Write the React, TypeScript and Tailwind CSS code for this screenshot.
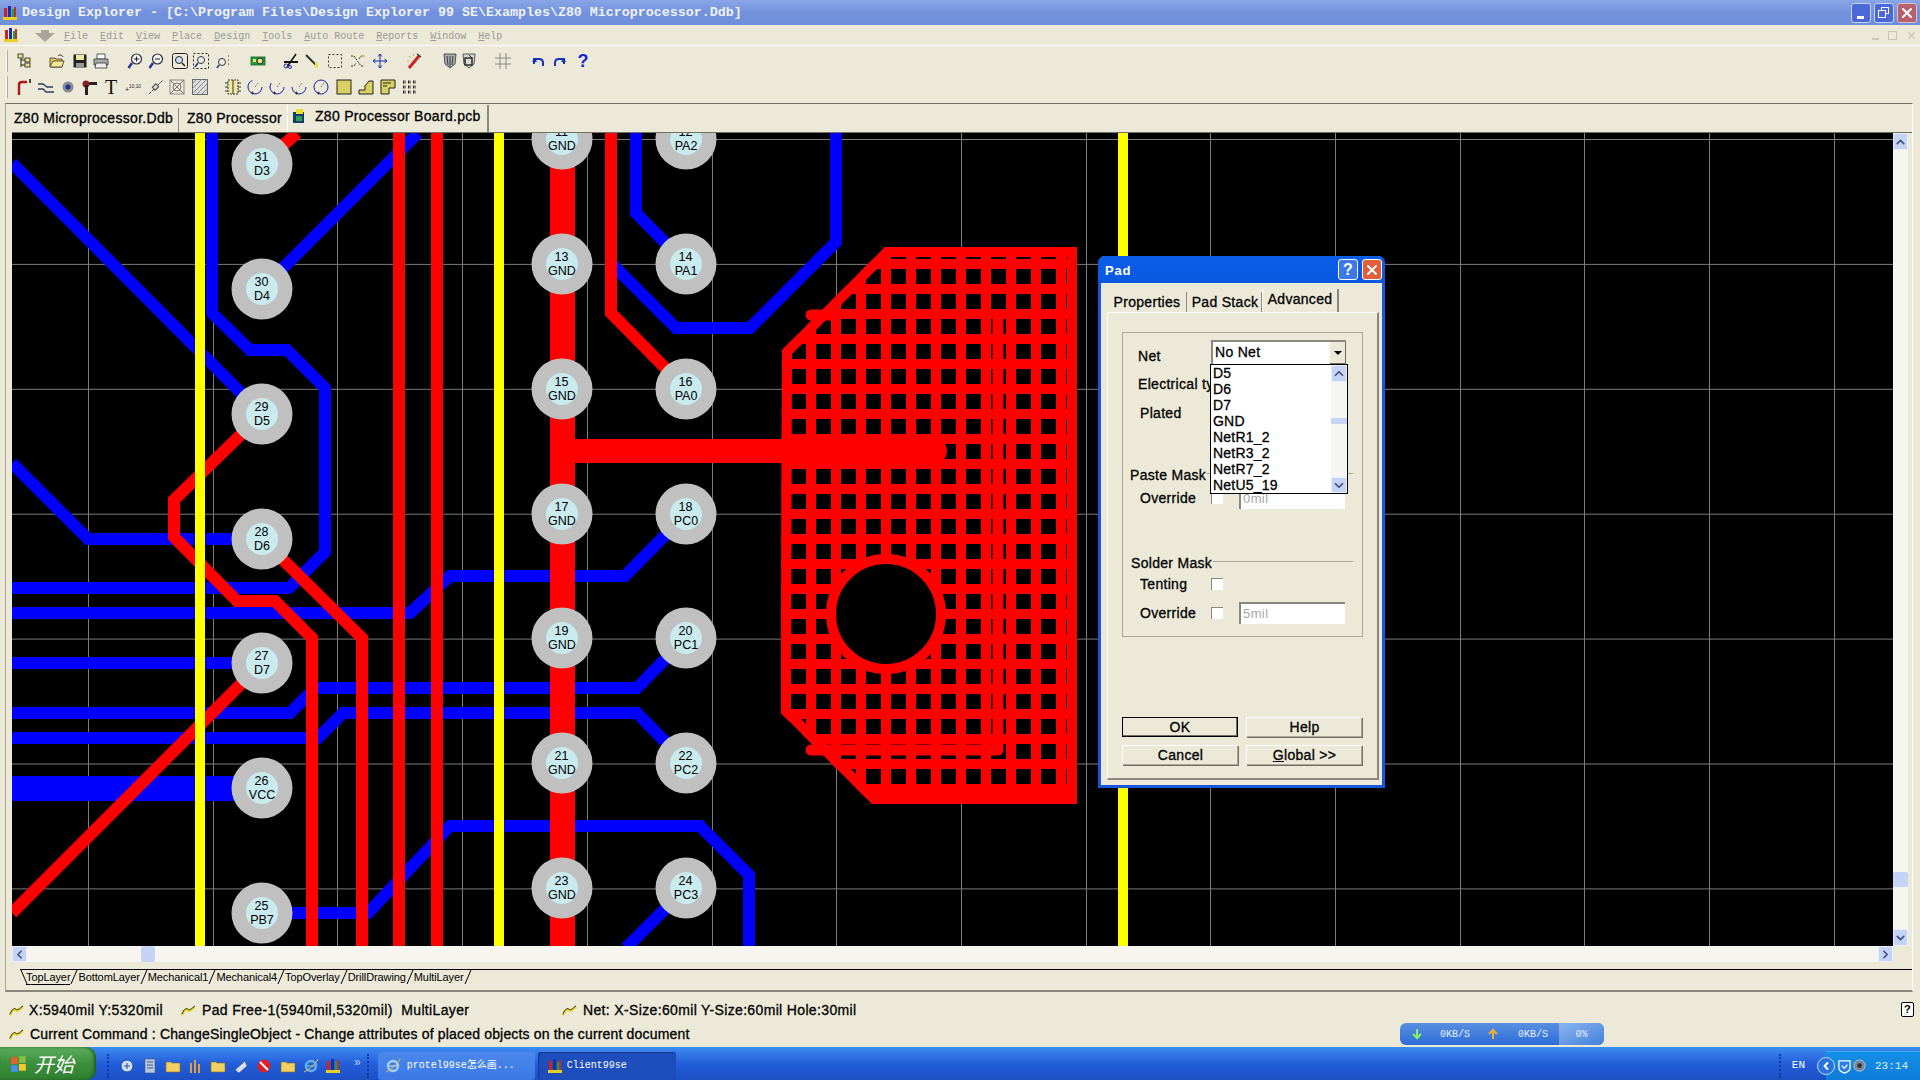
import type { ReactNode } from 'react'
import { ChevronDown, ChevronLeft, ChevronRight, ChevronUp, X } from 'lucide-react'

const MONO = "font-['Liberation_Mono','Noto_Sans_CJK_SC',monospace]"
const BOLDISH = '[-webkit-text-stroke:0.3px_black]'

function Ico({ className = '', children }: { className?: string; children: ReactNode }) {
  return (
    <svg viewBox="0 0 16 16" className={'w-4 h-4 shrink-0 ' + className}>
      {children}
    </svg>
  )
}

type P = { className?: string }

function ProtelIcon({ className = '' }: P) {
  return (
    <Ico className={className}>
      <rect x="1" y="12" width="14" height="3" fill="#e8d020" />
      <rect x="2" y="3" width="3" height="9" fill="#d02020" />
      <rect x="6" y="1" width="3" height="11" fill="#1830a8" />
      <rect x="10" y="4" width="3" height="8" fill="#20a040" />
      <rect x="12" y="2" width="2" height="10" fill="#c03020" />
    </Ico>
  )
}

function Mag({ className = '', children }: { className?: string; children?: ReactNode }) {
  return (
    <Ico className={className}>
      <line x1="5" y1="10" x2="1.5" y2="15" stroke="#2030a0" strokeWidth="2.4" />
      <circle cx="9.5" cy="6" r="5" fill="#f4f4f0" stroke="#303040" strokeWidth="1.2" />
      {children}
    </Ico>
  )
}

function Arc({ className = '', d }: P & { d: string }) {
  return (
    <Ico className={className}>
      <circle cx="8" cy="8" r="7" fill="none" stroke="#1020b0" strokeWidth="1" strokeDasharray={d} />
      <line x1="8" y1="8" x2="11" y2="4" stroke="#555" strokeWidth="1" strokeDasharray="1 1" />
      <path d="M4 14h3M5.500 12.500v3" stroke="#222" strokeWidth="0.8" />
    </Ico>
  )
}

function ToolbarOne() {
  return (
    <div className="h-[26px] flex items-center relative pl-[16px]">
      <div className="absolute left-[6px] top-[2px] w-[2px] h-[22px] border-l border-white border-r-1 border-r-[#aca899]" />
      <Ico>
        <path d="M5 3v11M5 7h4M5 12h4" stroke="#222" fill="none" />
        <rect x="2" y="1" width="5" height="4" fill="#f0e080" stroke="#222" strokeWidth="0.8" />
        <rect x="9" y="5" width="5" height="4" fill="#f0e080" stroke="#222" strokeWidth="0.8" />
        <rect x="9" y="10" width="5" height="4" fill="#f0e080" stroke="#222" strokeWidth="0.8" />
      </Ico>
      <Ico className="ml-[17px]">
        <path d="M1 5h5l1 1h6v8H1z" fill="#e8c850" stroke="#333" strokeWidth="0.8" />
        <path d="M1 14l3-6h11l-2 6z" fill="#f8e890" stroke="#333" strokeWidth="0.8" />
        <path d="M9 3c2-2 4-1 5 1" stroke="#222" fill="none" />
      </Ico>
      <Ico className="ml-[7px]">
        <rect x="1.500" y="1.500" width="13" height="13" fill="#222" />
        <rect x="4" y="2" width="8" height="5" fill="#f0e8a0" />
        <rect x="4" y="10" width="8" height="4" fill="#999" />
      </Ico>
      <Ico className="ml-[5px]">
        <path d="M4 1h8v5H4z" fill="#fff" stroke="#333" strokeWidth="0.8" />
        <path d="M1 6h14v6H1z" fill="#aaa" stroke="#333" strokeWidth="0.8" />
        <path d="M3 10h10l1 5H2z" fill="#eee" stroke="#333" strokeWidth="0.8" />
      </Ico>
      <Mag className="ml-[18px]">
        <path d="M7 6h5M9.500 3.500v5" stroke="#222" />
      </Mag>
      <Mag className="ml-[5px]">
        <path d="M7 6h5" stroke="#222" />
      </Mag>
      <Ico className="ml-[8px]">
        <rect x="0.500" y="0.500" width="15" height="15" rx="2" fill="none" stroke="#222" />
        <circle cx="7" cy="7" r="3.500" fill="#cfe0f8" stroke="#222" />
        <line x1="10" y1="10" x2="13" y2="13" stroke="#222" strokeWidth="1.500" />
      </Ico>
      <Ico className="ml-[5px]">
        <rect x="0.500" y="0.500" width="15" height="15" fill="none" stroke="#222" strokeDasharray="2 2" />
        <circle cx="8" cy="7" r="3.500" fill="#eee" stroke="#333" />
        <line x1="5" y1="10" x2="2" y2="14" stroke="#2030a0" strokeWidth="1.500" />
      </Ico>
      <Ico className="ml-[7px]">
        <circle cx="6" cy="9" r="3.500" fill="#eee" stroke="#333" />
        <line x1="3" y1="12" x2="1" y2="15" stroke="#2030a0" strokeWidth="1.500" />
        <path d="M12 3h2M12 7h2M12 11h2" stroke="#222" strokeDasharray="1 1" />
      </Ico>
      <Ico className="ml-[18px]">
        <rect x="1" y="4" width="14" height="8" fill="#20a040" stroke="#106020" strokeWidth="0.800" />
        <circle cx="10" cy="8" r="3" fill="#e8e080" stroke="#222" />
        <rect x="3" y="6" width="3" height="3" fill="#e8e080" />
      </Ico>
      <Ico className="ml-[17px]">
        <path d="M1 9h14" stroke="#111" strokeWidth="2" />
        <path d="M13 1L4 14" stroke="#111" strokeWidth="1.500" />
        <circle cx="3" cy="13" r="2" fill="none" stroke="#2030a0" />
        <circle cx="7" cy="14" r="1.500" fill="none" stroke="#2030a0" />
      </Ico>
      <Ico className="ml-[6px]">
        <path d="M1 2l10 10" stroke="#333" strokeWidth="2" />
        <path d="M10 8l3 3v4h-3z" fill="#f0e040" />
      </Ico>
      <Ico className="ml-[6px]">
        <rect x="1.500" y="1.500" width="13" height="13" fill="none" stroke="#333" strokeDasharray="2 2" />
      </Ico>
      <Ico className="ml-[7px]">
        <path d="M1 3h3l7 10h3M1 13h3l2-3M9 6l2-3h3" stroke="#333" fill="none" strokeDasharray="2 1" />
        <path d="M13 1l2 2-2 2z" fill="#e8c020" />
      </Ico>
      <Ico className="ml-[6px]">
        <path d="M8 1v14M1 8h14M8 1L6 3.500M8 1l2 2.500M8 15l-2-2.500M8 15l2-2.500M1 8l2.500-2M1 8l2.500 2M15 8l-2.500-2M15 8l-2.500 2" stroke="#1030b0" fill="none" />
      </Ico>
      <Ico className="ml-[18px]">
        <path d="M3 15L13 3" stroke="#d02020" strokeWidth="3" />
        <path d="M11 1l4 3" stroke="#333" strokeWidth="1.500" />
        <path d="M3 3l2 2M7 1l1 2M1 8l2 0" stroke="#c0b020" />
      </Ico>
      <Ico className="ml-[20px]">
        <path d="M2 1h12l-1 10-5 4-5-4z" fill="#a8acb0" stroke="#333" strokeWidth="0.800" />
        <path d="M8 3v11M5 3l1 9M11 3l-1 9" stroke="#222" strokeWidth="0.800" />
      </Ico>
      <Ico className="ml-[3px]">
        <path d="M2 1h12l-1 10-5 4-5-4z" fill="#d8d8d0" stroke="#333" strokeWidth="0.800" />
        <rect x="4" y="5" width="7" height="7" fill="none" stroke="#222" strokeWidth="1.400" />
        <path d="M8 2l3 3" stroke="#222" />
      </Ico>
      <Ico className="ml-[18px]">
        <path d="M5 0v16M11 0v16M0 5h16M0 11h16" stroke="#8a8a84" />
      </Ico>
      <Ico className="ml-[19px]">
        <path d="M4 11V6h5c3 0 4 2 4 4v3" fill="none" stroke="#1030c0" strokeWidth="2" />
        <path d="M2 9h5l-3 4z" fill="#1030c0" transform="rotate(180 4.500 9)" />
      </Ico>
      <Ico className="ml-[6px]">
        <path d="M12 11V6H7c-3 0-4 2-4 4v3" fill="none" stroke="#1030c0" strokeWidth="2" />
        <path d="M9 9h5l-3 4z" fill="#1030c0" transform="rotate(180 11.500 9)" />
      </Ico>
      <span className="ml-[7px] w-4 text-center text-[18px] leading-none font-bold text-[#1028c8]">?</span>
    </div>
  )
}

function ToolbarTwo() {
  return (
    <div className="h-[26px] flex items-center relative pl-[16px]">
      <div className="absolute left-[6px] top-[2px] w-[2px] h-[22px] border-l border-white border-r-1 border-r-[#aca899]" />
      <Ico>
        <path d="M3 16V6q0-3 3-3h5" fill="none" stroke="#b01818" strokeWidth="2.400" />
        <path d="M14 0v4" stroke="#111" strokeWidth="1.500" />
      </Ico>
      <Ico className="ml-[6px]">
        <path d="M0 5h5l4 3h6M0 10h5l3 3h8" fill="none" stroke="#2a3a60" strokeWidth="1.300" />
      </Ico>
      <Ico className="ml-[6px]">
        <circle cx="8" cy="8" r="5.500" fill="#8a8a90" />
        <circle cx="8" cy="8" r="2.500" fill="#1830a0" />
      </Ico>
      <Ico className="ml-[6px]">
        <rect x="6" y="3" width="9" height="3" fill="#222" />
        <circle cx="4" cy="5" r="3.500" fill="#8a2020" />
        <rect x="3" y="6" width="3" height="10" fill="#222" />
      </Ico>
      <span className="ml-[5px] w-4 text-center text-[20px] leading-[22px] font-['Liberation_Serif',serif] text-[#111]">T</span>
      <Ico className="ml-[6px]">
        <text x="0" y="13" fontSize="7" fill="#222" fontFamily="Liberation Sans, sans-serif">+</text>
        <text x="4" y="9" fontSize="4.800" fill="#222" fontFamily="Liberation Sans, sans-serif">10,10</text>
      </Ico>
      <Ico className="ml-[7px]">
        <path d="M1 15l14-14" stroke="#444" strokeDasharray="3 1" />
        <rect x="5" y="6" width="5" height="4" fill="#ddd" stroke="#444" transform="rotate(-45 7.500 8)" />
      </Ico>
      <Ico className="ml-[5px]">
        <rect x="1" y="1" width="14" height="14" fill="none" stroke="#888" />
        <path d="M1 1l14 14M15 1L1 15" stroke="#777" />
        <circle cx="8" cy="8" r="4" fill="none" stroke="#777" />
      </Ico>
      <Ico className="ml-[7px]">
        <rect x="0.500" y="0.500" width="15" height="15" fill="#ddd" stroke="#666" />
        <path d="M0 5l5-5M0 10L10 0M0 15L15 0M5 15L15 5M10 15l5-5" stroke="#888" />
      </Ico>
      <Ico className="ml-[17px]">
        <rect x="3" y="1" width="10" height="14" fill="#f0e8a0" stroke="#333" strokeDasharray="2 1" />
        <path d="M8 1v14M0 4h3M0 8h3M0 12h3M13 4h3M13 8h3M13 12h3" stroke="#333" />
      </Ico>
      <Arc className="ml-[6px]" d="30 14" />
      <Arc className="ml-[6px]" d="26 18" />
      <Arc className="ml-[6px]" d="22 22" />
      <Arc className="ml-[6px]" d="44 0" />
      <Ico className="ml-[7px]">
        <rect x="1" y="1" width="14" height="14" fill="#d8d060" stroke="#222" />
      </Ico>
      <Ico className="ml-[6px]">
        <path d="M1 15v-4h6V7l4-5h4v13z" fill="#d8d060" stroke="#222" />
      </Ico>
      <Ico className="ml-[6px]">
        <path d="M1 1h14v8h-6v6H1z" fill="#d8d060" stroke="#222" />
        <path d="M3 4h8M3 7h4" stroke="#222" />
      </Ico>
      <Ico className="ml-[6px]">
        <path d="M1 3h3M6 3h3M11 3h3M1 8h3M6 8h3M11 8h3M1 13h3M6 13h3M11 13h3" stroke="#222" strokeWidth="3" strokeDasharray="1 0.500" />
      </Ico>
    </div>
  )
}

const gridX = Array.from({ length: 15 }, (_, i) => Math.round(88 + i * 124.7) + 0.5)
const gridY = Array.from({ length: 7 }, (_, i) => 139.5 + i * 124.9)
const barX = Array.from({ length: 12 }, (_, i) => 786 + i * 25)
const barY = Array.from({ length: 22 }, (_, i) => 264 + i * 25)

const pads: [number, number, string, string][] = [
  [262, 164, '31', 'D3'],
  [262, 289, '30', 'D4'],
  [262, 414, '29', 'D5'],
  [262, 539, '28', 'D6'],
  [262, 663, '27', 'D7'],
  [262, 788, '26', 'VCC'],
  [262, 913, '25', 'PB7'],
  [562, 139, '11', 'GND'],
  [562, 264, '13', 'GND'],
  [562, 389, '15', 'GND'],
  [562, 514, '17', 'GND'],
  [562, 638, '19', 'GND'],
  [562, 763, '21', 'GND'],
  [562, 888, '23', 'GND'],
  [686, 139, '12', 'PA2'],
  [686, 264, '14', 'PA1'],
  [686, 389, '16', 'PA0'],
  [686, 514, '18', 'PC0'],
  [686, 638, '20', 'PC1'],
  [686, 763, '22', 'PC2'],
  [686, 888, '24', 'PC3'],
]

const blueTraces = [
  'M212 133V313L250 350H287L325 388V552L289 588H12',
  'M12 163L262 414',
  'M262 289L418 133',
  'M12 463L88 539H262',
  'M12 613H410L450 576H625L686 514',
  'M12 663H262',
  'M12 713H290L315 688H637L686 638',
  'M12 738H318L343 713H637L686 763',
  'M262 913H368L450 826H700L749 875V948',
  'M686 888L626 948',
  'M636 133V213L686 264',
  'M612 264L676 328H750L836 242V133',
]

const redTraces = [
  'M12 913L262 663',
  'M262 414L174 500V537L237 601H275L312 638V948',
  'M262 539L362 638V948',
  'M262 164L297 133',
  'M399 133V948',
  'M437 133V948',
  'M611 133V313L686 389',
]

const copper = '782,350 885,247 1077,247 1077,804 872,804 781,713'

function Board() {
  return (
    <svg viewBox="12 133 1881 813" className="block w-[1881px] h-[813px] bg-black">
      <defs>
        <clipPath id="pour">
          <polygon points={copper} />
        </clipPath>
      </defs>
      {gridX.map((x) => (
        <line key={x} x1={x} x2={x} y1="133" y2="946" stroke="#7c7c7c" />
      ))}
      {gridY.map((y) => (
        <line key={y} x1="12" x2="1893" y1={y} y2={y} stroke="#7c7c7c" />
      ))}
      {blueTraces.map((d) => (
        <path key={d} d={d} fill="none" stroke="#0000ff" strokeWidth="12" />
      ))}
      <rect x="12" y="776" width="250" height="25" fill="#0000ff" />
      <g clipPath="url(#pour)">
        {barX.map((x) => (
          <rect key={x} x={x - 5} y="247" width="10" height="557" fill="#ff0000" />
        ))}
        {barY.map((y) => (
          <rect key={y} x="781" y={y - 5} width="296" height="10" fill="#ff0000" />
        ))}
        <polygon points={copper} fill="none" stroke="#ff0000" strokeWidth="20" />
      </g>
      <path d="M811 315H830M998 315V750H811" fill="none" stroke="#ff0000" strokeWidth="11" strokeLinecap="round" strokeLinejoin="round" />
      <circle cx="886" cy="614" r="55" fill="#000" stroke="#ff0000" strokeWidth="10" />
      {redTraces.map((d) => (
        <path key={d} d={d} fill="none" stroke="#ff0000" strokeWidth="12" />
      ))}
      <rect x="550" y="133" width="25" height="813" fill="#ff0000" />
      <path d="M562 451H935" stroke="#ff0000" strokeWidth="24" strokeLinecap="round" />
      <rect x="195" y="133" width="10" height="813" fill="#ffff00" />
      <rect x="494" y="133" width="10" height="813" fill="#ffff00" />
      <rect x="1118" y="133" width="10" height="813" fill="#ffff00" />
      {pads.map(([x, y, n, name]) => (
        <g key={n} textAnchor="middle" fontSize="12.500" fontFamily="Liberation Sans, sans-serif" fill="#000">
          <circle cx={x} cy={y} r="30.500" fill="#c0c0c0" />
          <circle cx={x} cy={y} r="16" fill="#c9ebee" />
          <text x={x - 0.5} y={y - 3.5}>{n}</text>
          <text x={x} y={y + 10.5}>{name}</text>
        </g>
      ))}
    </svg>
  )
}

function ScrollBtn({ children, className = '' }: { children: ReactNode; className?: string }) {
  return (
    <div className={'flex items-center justify-center rounded-[2px] bg-[#c5d4f6] border border-[#e8eefb] text-[#3d4f86] ' + className}>
      {children}
    </div>
  )
}

function Slash({ back = false }: { back?: boolean }) {
  return (
    <svg viewBox="0 0 8 15" className="w-[8px] h-[15px] shrink-0">
      <path d={back ? 'M1 0L7 14' : 'M1 14L7 0'} stroke="#000" fill="none" />
    </svg>
  )
}

function Spark({ className = '' }: P) {
  return (
    <svg viewBox="0 0 16 14" className={'w-[15px] h-[13px] shrink-0 ' + className}>
      <path d="M1 12C3 6 6 5 8 7C10 8 12 5 15 3" fill="none" stroke="#e8d820" strokeWidth="2.600" />
      <path d="M1 11C3 5 6 4 8 6C10 7 12 4 15 2" fill="none" stroke="#222" strokeWidth="1" />
    </svg>
  )
}

const layers = ['BottomLayer', 'Mechanical1', 'Mechanical4', 'TopOverlay', 'DrillDrawing', 'MultiLayer']

function Field({ value }: { value: string }) {
  return (
    <div className="ml-[16px] w-[106px] h-[22px] bg-white border-t-2 border-l-2 border-t-[#8a887c] border-l-[#8a887c] pl-[2px] text-[13px] leading-[20px] text-[#a8a8a8] tracking-[0.4px]">
      {value}
    </div>
  )
}

function Check() {
  return <div className="ml-[5px] w-[12px] h-[12px] bg-white border-t border-l border-[#8a887c]" />
}

function DlgLabel({ children, className = '' }: { children: ReactNode; className?: string }) {
  return <span className={'text-[14px] tracking-[0.3px] text-black whitespace-nowrap ' + BOLDISH + ' ' + className}>{children}</span>
}

function DlgButton({ children, primary = false }: { children: ReactNode; primary?: boolean }) {
  return (
    <div
      className={
        'h-[20px] flex items-center justify-center text-[14px] tracking-[0.3px] text-black bg-[#ece9d8] ' +
        BOLDISH +
        ' ' +
        (primary
          ? 'border border-black shadow-[inset_-1px_-1px_0_#716f64]'
          : 'border-t border-l border-white shadow-[1px_1px_0_#716f64,inset_-1px_-1px_0_#aca899]')
      }
    >
      {children}
    </div>
  )
}

const nets = ['D5', 'D6', 'D7', 'GND', 'NetR1_2', 'NetR3_2', 'NetR7_2', 'NetU5_19']

function PadDialog() {
  return (
    <div className="absolute left-[1098px] top-[256px] w-[287px] h-[532px] rounded-t-[7px] border-[3px] border-t-0 border-[#1a56dc] bg-[#ece9d8] flex flex-col">
      <div className="-mx-[3px] h-[27px] rounded-t-[7px] bg-gradient-to-b from-[#0a5ee8] to-[#0a58e0] flex items-center pl-[7px] pr-[3px]">
        <span className="mt-[3px] text-[13px] font-bold tracking-[0.8px] text-white">Pad</span>
        <div className="ml-auto w-[20px] h-[21px] rounded-[3px] border border-white bg-[#3b78e8] flex items-center justify-center text-white font-bold text-[16px]">?</div>
        <div className="ml-[4px] w-[20px] h-[21px] rounded-[3px] border border-white bg-[#e0603c] flex items-center justify-center text-white">
          <X size={16} strokeWidth={3} />
        </div>
      </div>

      <div className="h-[29px] flex items-end pl-[7px]">
        <div className="w-[79px] h-[20px] flex items-center justify-center border-r border-[#8a887c]"><DlgLabel>Properties</DlgLabel></div>
        <div className="w-[75px] h-[20px] pl-[2px] flex items-center justify-center border-r border-[#8a887c]"><DlgLabel>Pad Stack</DlgLabel></div>
        <div className="w-[77px] h-[23px] pb-[2px] flex items-center justify-center border-r-2 border-[#8a887c] border-l border-l-white"><DlgLabel>Advanced</DlgLabel></div>
      </div>

      <div className="relative ml-[6px] w-[272px] h-[468px] border-t border-l border-white border-r-2 border-b-2 border-r-[#8a887c] border-b-[#8a887c] pt-[19px] pl-[14px]">
        <div className="relative w-[241px] h-[305px] border border-[#a8a698] pl-[15px]">
          <div className="h-[20px] mt-[13px] flex items-center">
            <DlgLabel className="w-[73px]">Net</DlgLabel>
          </div>
          <div className="h-[20px] mt-[8px] flex items-center">
            <DlgLabel>Electrical ty</DlgLabel>
          </div>
          <div className="h-[20px] mt-[9px] flex items-center pl-[2px]">
            <DlgLabel>Plated</DlgLabel>
          </div>

          <div className="-ml-[8px] mr-[9px] h-[20px] mt-[42px] flex items-center">
            <DlgLabel>Paste Mask</DlgLabel>
            <div className="flex-1 h-px bg-[#a8a698] ml-[1px] -mt-[3px]" />
          </div>
          <div className="h-[22px] mt-[2px] flex items-center pl-[2px]">
            <DlgLabel className="w-[66px]">Override</DlgLabel>
            <Check />
            <Field value="0mil" />
          </div>

          <div className="-ml-[7px] mr-[9px] h-[20px] mt-[44px] flex items-center">
            <DlgLabel>Solder Mask</DlgLabel>
            <div className="flex-1 h-px bg-[#a8a698] ml-[1px] -mt-[3px]" />
          </div>
          <div className="h-[20px] mt-[1px] flex items-center pl-[2px]">
            <DlgLabel className="w-[66px]">Tenting</DlgLabel>
            <Check />
          </div>
          <div className="h-[22px] mt-[8px] flex items-center pl-[2px]">
            <DlgLabel className="w-[66px]">Override</DlgLabel>
            <Check />
            <Field value="5mil" />
          </div>

          <div className="absolute left-[88px] top-[7px] w-[135px] h-[24px] bg-white border-t-2 border-l-2 border-t-[#8a887c] border-l-[#8a887c] flex items-center">
            <span className={'pl-[2px] pb-[1px] text-[14px] tracking-[0.3px] text-black ' + BOLDISH}>No Net</span>
            <div className="ml-auto w-[16px] h-full bg-[#ece9d8] border-r border-b border-[#716f64] flex items-center justify-center">
              <div className="w-0 h-0 border-x-[4px] border-x-transparent border-t-[4px] border-t-black" />
            </div>
          </div>

          <div className="absolute left-[87px] top-[31px] w-[138px] h-[130px] bg-white border border-black flex">
            <div className="flex-1 pl-[2px]">
              {nets.map((n) => (
                <div key={n} className={'h-[16px] text-[14px] leading-[16px] tracking-[0.2px] text-black ' + BOLDISH}>{n}</div>
              ))}
            </div>
            <div className="w-[16px] bg-[#f6f5ef] flex flex-col">
              <ScrollBtn className="h-[17px]"><ChevronUp size={15} strokeWidth={3} /></ScrollBtn>
              <div className="h-[36px]" />
              <div className="h-[6px] bg-[#c5d4f6] rounded-[1px]" />
              <div className="flex-1" />
              <ScrollBtn className="h-[16px]"><ChevronDown size={15} strokeWidth={3} /></ScrollBtn>
            </div>
          </div>
        </div>

        <div className="mt-[80px] w-[240px] grid grid-cols-[116px_116px] gap-x-[8px] gap-y-[8px]">
          <DlgButton primary>OK</DlgButton>
          <DlgButton>Help</DlgButton>
          <DlgButton>Cancel</DlgButton>
          <DlgButton><u>G</u>lobal &gt;&gt;</DlgButton>
        </div>
      </div>
    </div>
  )
}

function NetSpeed() {
  return (
    <div className={'absolute left-[1400px] top-[1023px] w-[204px] h-[22px] rounded-[6px] overflow-hidden flex items-center text-[#e8f0ff] text-[10px] bg-gradient-to-b from-[#5a8fe0] to-[#2a6cd8] ' + MONO}>
      <svg viewBox="0 0 12 12" className="ml-[11px] w-[12px] h-[12px]">
        <path d="M6 1v9M2 6l4 4 4-4" fill="none" stroke="#8cf060" strokeWidth="2" />
      </svg>
      <span className="ml-[17px]">0KB/S</span>
      <svg viewBox="0 0 12 12" className="ml-[17px] w-[12px] h-[12px]">
        <path d="M6 11V2M2 6l4-4 4 4" fill="none" stroke="#f0b030" strokeWidth="2" />
      </svg>
      <span className="ml-[19px]">0KB/S</span>
      <div className="ml-[11px] flex-1 h-full bg-gradient-to-br from-[#8cb4ec] to-[#3f80dc] flex items-center justify-center">0%</div>
    </div>
  )
}

function QuickIcon({ c, className = '' }: P & { c: string }) {
  return (
    <Ico className={className}>
      <path d="M1 4h5l1 1h8v9H1z" fill={c} stroke="#8a6a20" strokeWidth="0.600" />
    </Ico>
  )
}

function Taskbar() {
  return (
    <div className="h-[33px] flex relative bg-gradient-to-b from-[#3f8cf0] via-[#245edb] to-[#1c4fc4] text-white">
      <div className="h-full w-[96px] rounded-r-[10px] bg-gradient-to-b from-[#5cae5c] via-[#3c8f3c] to-[#2f7f2f] flex items-center pl-[10px] shadow-[inset_-2px_0_3px_#1f5f1f]">
        <svg viewBox="0 0 16 16" className="w-[18px] h-[18px]">
          <rect x="1" y="2" width="6" height="6" fill="#e8602c" />
          <rect x="8" y="1" width="6" height="6" fill="#80c040" />
          <rect x="1" y="9" width="6" height="6" fill="#4890e8" />
          <rect x="8" y="8" width="6" height="6" fill="#f8c830" />
        </svg>
        <span className="ml-[6px] text-[20px] italic font-['Noto_Sans_CJK_SC',sans-serif] leading-none">开始</span>
      </div>
      <div className="flex-1 h-full pt-[4px] flex items-center">
        <div className="ml-[11px] h-[24px] border-l-2 border-dotted border-[#0f3c9c]" />
        <Ico className="ml-[10px]">
          <circle cx="8" cy="8" r="6" fill="#cfe0f8" stroke="#2050a0" />
          <path d="M5 8h6M8 5v6" stroke="#2050a0" />
        </Ico>
        <Ico className="ml-[7px]">
          <rect x="3" y="1" width="10" height="14" fill="#b8c8e0" stroke="#405880" strokeWidth="0.600" />
          <path d="M5 4h6M5 7h6M5 10h6" stroke="#405880" />
        </Ico>
        <QuickIcon c="#f0d060" className="ml-[7px]" />
        <Ico className="ml-[6px]">
          <path d="M4 15V5M8 15V2M12 15V6" stroke="#e0a040" strokeWidth="2" />
        </Ico>
        <QuickIcon c="#f0d060" className="ml-[7px]" />
        <Ico className="ml-[7px]">
          <path d="M2 12L12 3l2 5-8 7z" fill="#d8e0f0" stroke="#405880" strokeWidth="0.600" />
        </Ico>
        <Ico className="ml-[7px]">
          <circle cx="8" cy="8" r="6.500" fill="#e02020" />
          <path d="M4 4l8 8" stroke="#fff" strokeWidth="2" />
        </Ico>
        <QuickIcon c="#f0d060" className="ml-[8px]" />
        <Ico className="ml-[7px]">
          <circle cx="8" cy="8" r="5" fill="none" stroke="#60b0f0" strokeWidth="2.500" />
          <path d="M3 8h10" stroke="#60b0f0" strokeWidth="1.500" />
          <path d="M1 14C4 13 13 6 15 1" stroke="#f0c030" fill="none" />
        </Ico>
        <ProtelIcon className="ml-[6px]" />
        <span className="ml-[13px] text-[12px] leading-none text-[#b8d0f8] -mt-[8px]">»</span>
        <div className="ml-[6px] h-[24px] border-l-2 border-dotted border-[#0f3c9c]" />
        <div className={'ml-[9px] w-[157px] h-[28px] rounded-[3px] bg-gradient-to-b from-[#4a88ec] to-[#3c78e4] flex items-center pl-[7px] text-[10px] ' + MONO}>
          <Ico>
            <circle cx="8" cy="8" r="5" fill="none" stroke="#a0d0f8" strokeWidth="2.400" />
            <path d="M3 8h10" stroke="#a0d0f8" strokeWidth="1.400" />
            <path d="M1 14C4 13 13 6 15 1" stroke="#f0c030" fill="none" />
          </Ico>
          <span className="ml-[6px] whitespace-nowrap">protel99se怎么画...</span>
        </div>
        <div className={'ml-[3px] w-[138px] h-[28px] rounded-[3px] bg-[#1e4ebc] shadow-[inset_1px_1px_2px_#123a90] flex items-center pl-[9px] text-[10px] ' + MONO}>
          <ProtelIcon />
          <span className="ml-[4px]">Client99se</span>
        </div>
        <div className="ml-auto h-[24px] border-l-2 border-dotted border-[#0f3c9c]" />
        <span className={'ml-[11px] text-[11px] ' + MONO}>EN</span>
        <div className={'ml-[21px] h-full w-[94px] bg-gradient-to-b from-[#1590e8] to-[#0f7cd8] border-t border-[#38a8f0] flex items-center text-[#dff0ff] text-[11px] ' + MONO}>
          <div className="-ml-[9px] w-[18px] h-[18px] rounded-full bg-[#2a72dc] border border-[#bcdcf8] flex items-center justify-center text-white">
            <ChevronLeft size={12} strokeWidth={4} />
          </div>
          <svg viewBox="0 0 16 16" className="ml-[2px] w-[15px] h-[15px]">
            <path d="M2 2h12v7c0 3-3 5-6 6-3-1-6-3-6-6z" fill="#2a80e0" stroke="#fff" strokeWidth="1.300" />
            <path d="M5 7l3 3 3-4" fill="none" stroke="#fff" strokeWidth="1.300" />
          </svg>
          <svg viewBox="0 0 16 16" className="ml-[1px] w-[15px] h-[15px]">
            <circle cx="7" cy="7" r="6" fill="#7a8494" stroke="#d0d8e0" strokeWidth="0.800" />
            <circle cx="7" cy="7" r="2.500" fill="#2a3040" />
          </svg>
          <span className="ml-[7px]">23:14</span>
        </div>
      </div>
    </div>
  )
}

export default function App() {
  return (
    <div className="relative w-[1920px] h-[1080px] overflow-hidden bg-[#ece9d8] font-['Liberation_Sans',sans-serif]">
      <div className="h-[25px] flex items-center bg-gradient-to-b from-[#8aa6e8] via-[#7391dc] to-[#6f8fdb] pl-[2px]">
        <ProtelIcon />
        <span className={'ml-[4px] text-[13.33px] font-bold whitespace-nowrap text-[#eef2fc] ' + MONO}>
          Design Explorer - [C:\Program Files\Design Explorer 99 SE\Examples\Z80 Microprocessor.Ddb]
        </span>
        <div className="ml-auto flex gap-[3px] pr-[3px]">
          <div className="w-[20px] h-[20px] rounded-[3px] border border-[#c8d4f4] bg-[#4a68d8] flex items-end pb-[3px] pl-[5px]">
            <div className="w-[7px] h-[3px] bg-white" />
          </div>
          <div className="w-[20px] h-[20px] rounded-[3px] border border-[#c8d4f4] bg-[#4a68d8] relative">
            <div className="absolute left-[6px] top-[3px] w-[8px] h-[7px] border border-white" />
            <div className="absolute left-[3px] top-[6px] w-[8px] h-[8px] border border-white bg-[#4a68d8]" />
          </div>
          <div className="w-[20px] h-[20px] rounded-[3px] border border-[#d8c0c8] bg-[#b8606c] flex items-center justify-center text-white">
            <X size={16} strokeWidth={3} />
          </div>
        </div>
      </div>

      <div className="h-[21px] flex items-center border-b border-white pl-[3px]">
        <ProtelIcon />
        <svg viewBox="0 0 20 12" className="ml-[16px] mt-[1px] w-[20px] h-[12px]">
          <path d="M0 3h20L10 12z M6 0h8v4H6z" fill="#a8a69c" />
        </svg>
        <nav className={'ml-[9px] mt-[3px] flex gap-3 text-[10px] text-[#9a9a94] ' + MONO}>
          <span><u>F</u>ile</span>
          <span><u>E</u>dit</span>
          <span><u>V</u>iew</span>
          <span><u>P</u>lace</span>
          <span><u>D</u>esign</span>
          <span><u>T</u>ools</span>
          <span><u>A</u>uto Route</span>
          <span><u>R</u>eports</span>
          <span><u>W</u>indow</span>
          <span><u>H</u>elp</span>
        </nav>
        <div className="ml-auto flex items-center gap-[9px] pr-[3px] text-[#c8c6b8]">
          <div className="w-[7px] h-[2px] mt-[8px] bg-[#c8c6b8]" />
          <div className="w-[9px] h-[9px] border border-[#c8c6b8]" />
          <X size={11} strokeWidth={3} />
        </div>
      </div>

      <div className="h-[57px] pt-[2px]">
        <ToolbarOne />
        <ToolbarTwo />
      </div>

      <div className="ml-[5px] w-[1908px] h-[889px] border-t border-t-[#716f64] border-b-2 border-b-[#8a887c] border-l border-l-[#aca899] border-r border-r-white flex flex-col">
        <div className="h-[28px] flex items-end pl-[2px] text-[14px] tracking-[0.3px] text-black">
          <div className={'h-[24px] w-[171px] pb-[3px] flex items-center pl-[6px] border-r border-[#8a887c] whitespace-nowrap ' + BOLDISH}>Z80 Microprocessor.Ddb</div>
          <div className={'h-[24px] w-[108px] pb-[3px] flex items-center pl-[8px] whitespace-nowrap ' + BOLDISH}>Z80 Processor</div>
          <div className={'h-[27px] w-[202px] pb-[5px] flex items-center border-r-2 border-[#8a887c] border-l border-l-white whitespace-nowrap ' + BOLDISH}>
            <Ico className="ml-[4px] mr-[7px]">
              <rect x="1" y="4" width="11" height="11" fill="#143c6c" />
              <rect x="4" y="1" width="7" height="5" fill="#f0e020" />
              <rect x="4" y="8" width="6" height="5" fill="#30a050" />
            </Ico>
            Z80 Processor Board.pcb
          </div>
        </div>

        <div className="ml-[6px] flex border-t border-t-[#716f64]">
          <Board />
          <div className="w-[15px] h-[813px] bg-[#f6f5ef] flex flex-col">
            <ScrollBtn className="h-[17px]"><ChevronUp size={14} strokeWidth={3} /></ScrollBtn>
            <div className="h-[722px]" />
            <div className="h-[15px] bg-[#c5d4f6] rounded-[2px]" />
            <div className="flex-1" />
            <ScrollBtn className="h-[17px]"><ChevronDown size={14} strokeWidth={3} /></ScrollBtn>
          </div>
        </div>

        <div className="ml-[6px] mr-[19px] h-[16px] bg-[#f6f5ef] flex">
          <ScrollBtn className="w-[15px]"><ChevronLeft size={13} strokeWidth={3} /></ScrollBtn>
          <div className="w-[114px]" />
          <div className="w-[14px] bg-[#c5d4f6] rounded-[2px]" />
          <div className="flex-1" />
          <ScrollBtn className="w-[15px]"><ChevronRight size={13} strokeWidth={3} /></ScrollBtn>
        </div>

        <div className="ml-[14px] mt-[7px] h-[16px] border-t border-black flex text-[11px] tracking-[-0.1px] leading-[15px] text-black">
          <Slash back />
          <span className="border-b border-black h-[15px] -ml-[2px]">TopLayer</span>
          {layers.map((l) => (
            <div key={l} className="flex">
              <Slash />
              <span>{l}</span>
            </div>
          ))}
          <Slash />
        </div>
      </div>

      <div className="h-[55px] relative pt-[8px] text-[14px] tracking-[0.35px] text-black">
        <div className={'h-[20px] flex items-center whitespace-nowrap ' + BOLDISH}>
          <Spark className="ml-[9px] mr-[5px]" />
          <span className="w-[152px]">X:5940mil Y:5320mil</span>
          <Spark className="mr-[6px]" />
          <span className="w-[360px]">Pad Free-1(5940mil,5320mil)&nbsp;&nbsp;MultiLayer</span>
          <Spark className="mr-[6px]" />
          <span>Net: X-Size:60mil Y-Size:60mil Hole:30mil</span>
        </div>
        <div className={'mt-[4px] h-[20px] flex items-center whitespace-nowrap tracking-[0.17px] ' + BOLDISH}>
          <Spark className="ml-[9px] mr-[6px]" />
          <span>Current Command : ChangeSingleObject - Change attributes of placed objects on the current document</span>
        </div>
        <div className="absolute right-[6px] top-[10px] w-[13px] h-[15px] border border-black rounded-[2px] bg-white text-[11px] leading-[13px] text-center font-bold">?</div>
      </div>

      <Taskbar />
      <NetSpeed />
      <PadDialog />
    </div>
  )
}
